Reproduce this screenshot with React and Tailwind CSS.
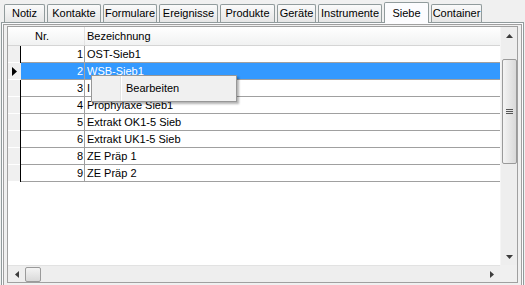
import React from 'react';

const tabs = [
  { label: 'Notiz', w: 'w-[41px]' },
  { label: 'Kontakte', w: 'w-[54px]' },
  { label: 'Formulare', w: 'w-[54px]' },
  { label: 'Ereignisse', w: 'w-[59px]' },
  { label: 'Produkte', w: 'w-[55px]' },
  { label: 'Geräte', w: 'w-[39px]' },
  { label: 'Instrumente', w: 'w-[64px]' },
  { label: 'Siebe', w: 'w-[45px]', active: true },
  { label: 'Container', w: 'w-[51px]' },
];

const rows = [
  { nr: 1, name: 'OST-Sieb1' },
  { nr: 2, name: 'WSB-Sieb1', selected: true },
  { nr: 3, name: 'I' },
  { nr: 4, name: 'Prophylaxe Sieb1' },
  { nr: 5, name: 'Extrakt OK1-5 Sieb' },
  { nr: 6, name: 'Extrakt UK1-5 Sieb' },
  { nr: 8, name: 'ZE Präp 1' },
  { nr: 9, name: 'ZE Präp 2' },
];

const Arrow = ({ dir }) => {
  const pts = {
    up: '0,4 3.5,0 7,4',
    down: '0,0 3.5,4 7,0',
    left: '4,0 0,3.5 4,7',
    right: '0,0 4,3.5 0,7',
  }[dir];
  const vert = dir === 'up' || dir === 'down';
  return (
    <svg width={vert ? 7 : 4} height={vert ? 4 : 7} viewBox={vert ? '0 0 7 4' : '0 0 4 7'}>
      <polygon points={pts} fill="#3c3c3c" />
    </svg>
  );
};

const Thumb = ({ vertical }) => (
  <div
    className={`flex items-center justify-center rounded-[2px] border border-[#9a9a9a] ${
      vertical
        ? 'w-[15px] h-[105px] bg-gradient-to-r from-[#f4f4f4] to-[#d9d9d9]'
        : 'w-[16px] h-[15px] bg-gradient-to-b from-[#f4f4f4] to-[#d9d9d9]'
    }`}
  >
    {vertical && (
      <div className="flex flex-col gap-[1px]">
        <div className="w-[7px] h-[1px] bg-[#555]" />
        <div className="w-[7px] h-[1px] bg-[#555]" />
        <div className="w-[7px] h-[1px] bg-[#555]" />
      </div>
    )}
  </div>
);

export default function App() {
  return (
    <div className="relative w-[525px] h-[285px] overflow-hidden bg-[#f0f0f0] text-[11px] text-black font-['Liberation_Sans',Arial,sans-serif] select-none">
      {/* tab strip */}
      <div className="flex items-end h-[22px] pl-[4px] gap-[2px]">
        {tabs.map((t) =>
          t.active ? (
            <div
              key={t.label}
              className={`${t.w} relative z-10 h-[21px] -mb-[1px] border border-b-0 border-[#919b9c] rounded-t-[2px] bg-[#fcfcfe] flex items-start justify-center pt-[2px]`}
            >
              {t.label}
            </div>
          ) : (
            <div
              key={t.label}
              className={`${t.w} h-[18px] border border-b-0 border-[#919b9c] rounded-t-[2px] bg-gradient-to-b from-[#fafafa] to-[#e6e6e6] flex items-center justify-center`}
            >
              {t.label}
            </div>
          )
        )}
      </div>

      {/* tab page */}
      <div className="ml-[1px] w-[523px] h-[270px] border border-[#919b9c] bg-[#fcfcfe] p-[1px]">
        <div className="h-full border border-[#a0a0a0] bg-[#f0f0f0] px-[3px] pt-[1px]">
          {/* grid */}
          <div className="w-[511px] h-[257px] border border-[#a0a0a0] bg-white flex flex-col">
            <div className="flex flex-1 min-h-0">
              <div className="flex-1 flex flex-col">
                {/* header */}
                <div className="flex h-[19px] border-b border-[#d5d5d5] bg-gradient-to-b from-white to-[#f1f2f2]">
                  <div className="w-[12px]" />
                  <div className="w-[65px] border-r border-[#e3e3e3] pl-[15px] leading-[18px]">Nr.</div>
                  <div className="flex-1 pl-[2px] leading-[18px]">Bezeichnung</div>
                </div>
                {rows.map((r) => (
                  <div key={r.nr} className="flex h-[17px]">
                    <div className="w-[12px] border-b border-white bg-[#f0f0f0] flex items-center justify-center">
                      {r.selected && (
                        <svg width="5" height="9" viewBox="0 0 5 9">
                          <polygon points="0,0 5,4.5 0,9" fill="#000" />
                        </svg>
                      )}
                    </div>
                    <div className={`w-[1px] ${r.selected ? 'bg-[#f0f0f0]' : 'bg-black'}`} />
                    <div
                      className={`w-[64px] border-r border-b border-[#a0a0a0] text-right pr-[1px] leading-[16px] ${
                        r.selected ? 'bg-[#3399ff] text-white' : ''
                      }`}
                    >
                      {r.nr}
                    </div>
                    <div
                      className={`flex-1 border-b border-[#a0a0a0] pl-[2px] leading-[16px] ${
                        r.selected ? 'bg-[#3399ff] text-white' : ''
                      }`}
                    >
                      {r.name}
                    </div>
                  </div>
                ))}
              </div>

              {/* vertical scrollbar */}
              <div className="w-[17px] bg-[#eeeeee] border-l border-[#f5f5f5] flex flex-col items-center">
                <div className="h-[17px] flex items-center justify-center">
                  <Arrow dir="up" />
                </div>
                <div className="mt-[15px]">
                  <Thumb vertical />
                </div>
                <div className="flex-1" />
                <div className="h-[17px] flex items-center justify-center">
                  <Arrow dir="down" />
                </div>
              </div>
            </div>

            {/* horizontal scrollbar */}
            <div className="flex h-[17px]">
              <div className="flex-1 bg-[#eeeeee] border-t border-[#e2e2e2] flex items-center">
                <div className="w-[17px] flex items-center justify-center">
                  <Arrow dir="left" />
                </div>
                <Thumb />
                <div className="flex-1" />
                <div className="w-[17px] flex items-center justify-center">
                  <Arrow dir="right" />
                </div>
              </div>
              <div className="w-[17px] bg-[#f0f0f0]" />
            </div>
          </div>
        </div>
      </div>

      {/* context menu */}
      <div className="absolute left-[91px] top-[75px] w-[146px] h-[27px] border border-[#979797] bg-[#f0f0f0] shadow-[2px_2px_2px_rgba(0,0,0,0.3)] flex">
        <div className="w-[28px]" />
        <div className="w-[1px] bg-[#e2e3e3]" />
        <div className="w-[1px] bg-white" />
        <div className="flex-1 pl-[4px] flex items-center">Bearbeiten</div>
      </div>
    </div>
  );
}
